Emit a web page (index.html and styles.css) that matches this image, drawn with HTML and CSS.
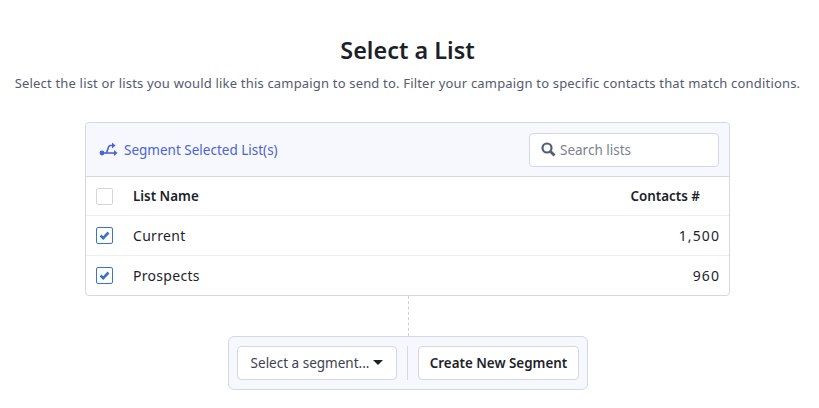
FILE: index.html
```html
<!DOCTYPE html>
<html lang="en">
<head>
    <meta charset="UTF-8">
    <meta name="viewport" content="width=device-width, initial-scale=1.0">
    <title>Select a List</title>
    <link rel="stylesheet" href="styles.css">
</head>
<body>
    <div class="top">
        <h2>Select a List</h2>
        <p>Select the list or lists you would like this campaign to send to. Filter your campaign to specific contacts that match conditions.</p>
    </div>

    <div class="card">
        <div class="card-head">
            <a class="segment-link" href="#">
                <svg width="19" height="15" viewBox="0 0 19 15" fill="none">
                    <circle cx="3" cy="11" r="2.4" fill="#4a63d8"/>
                    <path d="M3 11H16" stroke="#4a63d8" stroke-width="1.6"/>
                    <path d="M15 8l3.5 3-3.5 3z" fill="#4a63d8"/>
                    <path d="M7 11C9 10 8.500 4 11 3.500H14" stroke="#4a63d8" stroke-width="1.6"/>
                    <path d="M13 .5l3.500 3-3.500 3z" fill="#4a63d8"/>
                </svg>
                Segment Selected List(s)
            </a>
            <div class="search">
                <svg width="15" height="15" viewBox="0 0 15 15" fill="none">
                    <circle cx="6" cy="6" r="4.500" stroke="#545c78" stroke-width="2.200"/>
                    <path d="M9.500 9.500l4 4" stroke="#545c78" stroke-width="2.800"/>
                </svg>
                <span>Search lists</span>
            </div>
        </div>
        <div class="row row-head">
            <span class="check"></span>
            <span class="name">List Name</span>
            <span class="count">Contacts #</span>
        </div>
        <div class="row">
            <span class="check on">
                <svg width="11" height="9" viewBox="0 0 11 9" fill="none"><path d="M1.500 4.500l2.700 2.700 5.300-5.700" stroke="#3a74c4" stroke-width="2.600"/></svg>
            </span>
            <span class="name">Current</span>
            <span class="num">1,500</span>
        </div>
        <div class="row">
            <span class="check on">
                <svg width="11" height="9" viewBox="0 0 11 9" fill="none"><path d="M1.500 4.500l2.700 2.700 5.300-5.700" stroke="#3a74c4" stroke-width="2.600"/></svg>
            </span>
            <span class="name">Prospects</span>
            <span class="num">960</span>
        </div>
    </div>

    <div class="dash"></div>

    <div class="actions">
        <button class="btn select">Select a segment...<i class="caret"></i></button>
        <span class="divider"></span>
        <button class="btn create">Create New Segment</button>
    </div>
</body>
</html>
```

FILE: styles.css
```css
body {
    font-family: "Noto Sans", "Liberation Sans", sans-serif;
    margin: 0;
    padding: 0;
    color: #1d1f2b;
    background-color: #fff;
}
.top {
    text-align: center;
    padding: 35px 4px 0 0;
}
h2 {
    margin: 0;
    font-size: 23.4px;
    line-height: 30px;
    font-weight: 600;
}
.top p {
    margin: 9px 0 0;
    font-size: 13px;
    line-height: 18px;
    letter-spacing: .18px;
    color: #555a6e;
}
.card {
    width: 643px;
    margin: 30px 0 0 85px;
    border: 1px solid #d3d7e6;
    border-radius: 4px;
}
.card-head {
    display: flex;
    justify-content: space-between;
    align-items: center;
    height: 53px;
    padding: 0 10px 0 13px;
    background-color: #f7f8fe;
    border-bottom: 1px solid #d3d7e6;
    border-radius: 4px 4px 0 0;
}
.segment-link {
    display: flex;
    align-items: center;
    gap: 6px;
    font-size: 13.5px;
    color: #4a63d8;
    text-decoration: none;
}
.search {
    display: flex;
    align-items: center;
    gap: 4px;
    box-sizing: border-box;
    width: 190px;
    height: 34px;
    padding: 0 11px;
    font-size: 13.5px;
    color: #7b7f8f;
    background-color: #fff;
    border: 1px solid #d3d7e6;
    border-radius: 4px;
}
.row {
    display: flex;
    align-items: center;
    height: 39px;
    padding: 0 10px;
    font-size: 14px;
    letter-spacing: .3px;
    border-bottom: 1px solid #eceef5;
}
.row:last-child {
    border-bottom: none;
}
.row-head {
    height: 38px;
    font-weight: 600;
    font-size: 13.4px;
    letter-spacing: 0;
}
.check {
    display: flex;
    align-items: center;
    justify-content: center;
    box-sizing: border-box;
    width: 17px;
    height: 17px;
    margin-right: 20px;
    background-color: #fff;
    border: 1px solid #d5d6da;
    border-radius: 2px;
}
.check.on {
    border-color: #3a74c4;
}
.name {
    flex-grow: 1;
}
.num {
    letter-spacing: 1.1px;
    margin-right: -1px;
}
.count {
    margin-right: 19px;
}
.dash {
    width: 0;
    height: 40px;
    margin-left: 408px;
    border-left: 1px dashed #cfd0d6;
}
.actions {
    display: flex;
    align-items: center;
    box-sizing: border-box;
    width: 360px;
    height: 54px;
    margin-left: 228px;
    padding: 0 8px;
    background-color: #f7f8fe;
    border: 1px solid #d3d7e6;
    border-radius: 6px;
}
.btn {
    display: flex;
    align-items: center;
    justify-content: center;
    box-sizing: border-box;
    height: 34px;
    font-family: inherit;
    font-size: 13.4px;
    color: #1d1f2b;
    background-color: #fff;
    border: 1px solid #d3d7e6;
    border-radius: 4px;
}
.select {
    width: 160px;
    font-size: 13.5px;
    color: #3d4152;
}
.create {
    width: 161px;
    font-weight: 600;
}
.caret {
    margin: -2px 0 0 4px;
    border-top: 5px solid #1d1f2b;
    border-left: 5.5px solid transparent;
    border-right: 5.5px solid transparent;
}
.divider {
    width: 1px;
    height: 34px;
    margin: 0 10px;
    background-color: #d3d7e6;
}
```
